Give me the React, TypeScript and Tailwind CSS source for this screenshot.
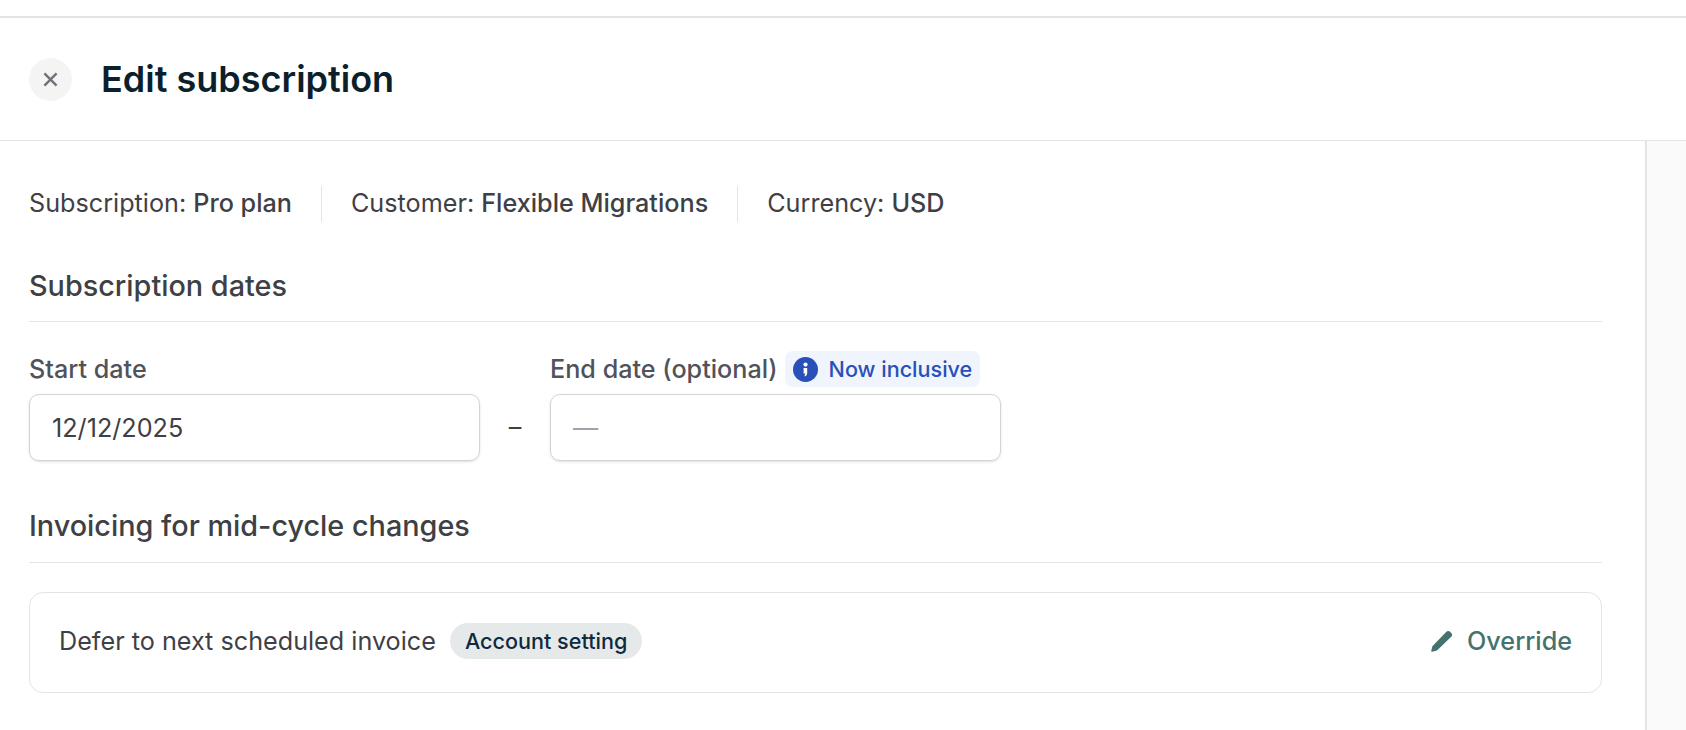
const font = { fontFamily: "Inter, sans-serif" };

function InfoIcon() {
  return (
    <svg width="25" height="25" viewBox="0 0 25 25" className="shrink-0">
      <circle cx="12.5" cy="12.5" r="12.5" fill="#2850B8" />
      <circle cx="12.5" cy="7.6" r="2.1" fill="#fff" />
      <path d="M10.6 11h3.6v5.2c0 1.5-.9 2.6-2.5 3.2v-1.8c.5-.2.7-.6.7-1.1h-1.8z" fill="#fff" />
    </svg>
  );
}

function PencilIcon() {
  return (
    <svg width="22" height="22" viewBox="0 0 22 22" className="shrink-0">
      <path
        d="M1 21.7c-.5.1-.9-.3-.8-.8l1.2-4.7L15.6 1.6c.9-.9 2.3-.9 3.2-.1l1.7 1.8c.9.9.9 2.3 0 3.2L6 20.5z"
        fill="#44736F"
      />
    </svg>
  );
}

function MetaItem({ label, value }: { label: string; value: string }) {
  return (
    <span className="pb-[2px] text-[25.2px] leading-[36px] text-[#3F3F46]">
      {label} <span className="font-medium">{value}</span>
    </span>
  );
}

export default function App() {
  return (
    <div style={font} className="h-[730px] w-[1686px] overflow-hidden bg-white pt-4">
      <div className="h-[2px] bg-[#E4E4E7]" />
      <header className="flex h-[123px] items-center gap-[29px] border-b border-[#E4E4E7] pl-[29px]">
        <button className="flex h-[43px] w-[43px] items-center justify-center rounded-full bg-[#F4F4F5]">
          <svg width="15" height="15" viewBox="0 0 16 16" fill="none" stroke="#71717A" strokeWidth="2.6">
            <path d="M1.5 1.5l13 13M14.5 1.5l-13 13" />
          </svg>
        </button>
        <h1 className="text-[36px] font-semibold leading-none text-[#0B1F2C]">Edit subscription</h1>
      </header>

      <div className="flex h-[589px]">
        <main className="w-[1645px] px-[29px] pt-[45px] pr-[43px]">
          <div className="flex h-[36px] items-center gap-[29px]">
            <MetaItem label="Subscription:" value="Pro plan" />
            <div className="h-[36px] w-px bg-[#E4E4E7]" />
            <MetaItem label="Customer:" value="Flexible Migrations" />
            <div className="h-[36px] w-px bg-[#E4E4E7]" />
            <MetaItem label="Currency:" value="USD" />
          </div>

          <h2 className="mt-[46px] border-b border-[#E4E4E7] pb-[17px] text-[28.8px] font-medium leading-[36px] text-[#3F3F46]">
            Subscription dates
          </h2>

          <div className="mt-[30px] flex items-end gap-[27px]">
            <div className="w-[451px]">
              <div className="flex h-[36px] items-center text-[25.2px] font-medium text-[#52525B]">Start date</div>
              <div className="mt-[6px] flex h-[67px] items-center rounded-[10px] border border-[#D4D4D8] px-[22px] pt-[2px] text-[25.2px] text-[#3F3F46] shadow-sm">
                12/12/2025
              </div>
            </div>
            <div className="flex h-[67px] w-[16px] items-center justify-center text-[25.2px] text-[#3F3F46]">–</div>
            <div className="w-[451px]">
              <div className="flex h-[36px] items-center gap-[7px] whitespace-nowrap text-[25.2px] font-medium text-[#52525B]">
                End date (optional)
                <span className="mb-[2px] flex h-[36px] items-center gap-[11px] rounded-lg bg-[#EFF4FD] px-2 text-[21.6px] font-medium text-[#2850B8]">
                  <InfoIcon />
                  Now inclusive
                </span>
              </div>
              <div className="mt-[6px] flex h-[67px] items-center rounded-[10px] border border-[#D4D4D8] px-[22px] pt-[2px] text-[25.2px] text-[#A1A1AA] shadow-sm">
                —
              </div>
            </div>
          </div>

          <h2 className="mt-[47px] border-b border-[#E4E4E7] pb-[18px] text-[28.8px] font-medium leading-[36px] text-[#3F3F46]">
            Invoicing for mid-cycle changes
          </h2>

          <div className="mt-[29px] flex h-[101px] items-center justify-between rounded-[14px] border border-[#E4E4E7] pb-[2px] pl-[29px] pr-[29px]">
            <div className="flex items-center gap-[14px]">
              <span className="text-[25.2px] text-[#3F3F46]">Defer to next scheduled invoice</span>
              <span className="flex h-[36px] items-center rounded-full bg-[#E6E9EA] px-[15px] text-[21.6px] font-medium text-[#0F2A3D]">
                Account setting
              </span>
            </div>
            <button className="flex items-center gap-[14px] text-[25.2px] font-medium text-[#44736F]">
              <PencilIcon />
              Override
            </button>
          </div>
        </main>
        <aside className="flex-1 border-l-2 border-[#E4E4E7] bg-[#FAFAFA]" />
      </div>
    </div>
  );
}
